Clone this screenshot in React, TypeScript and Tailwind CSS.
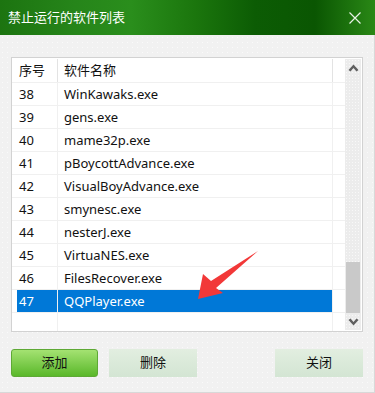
const rows = [
  { no: 38, name: 'WinKawaks.exe' },
  { no: 39, name: 'gens.exe' },
  { no: 40, name: 'mame32p.exe' },
  { no: 41, name: 'pBoycottAdvance.exe' },
  { no: 42, name: 'VisualBoyAdvance.exe' },
  { no: 43, name: 'smynesc.exe' },
  { no: 44, name: 'nesterJ.exe' },
  { no: 45, name: 'VirtuaNES.exe' },
  { no: 46, name: 'FilesRecover.exe' },
  { no: 47, name: 'QQPlayer.exe', selected: true },
]

const font = "font-['Noto_Sans','Noto_Sans_CJK_SC',sans-serif]"

const Chevron = ({ down }: { down?: boolean }) => (
  <svg width="11" height="8" viewBox="0 0 11 8" className={down ? 'rotate-180' : ''}>
    <path d="M5.5 0.5 L10.5 6 L8.5 7.5 L5.5 4 L2.5 7.5 L0.5 6 Z" fill="#5f5f5f" />
  </svg>
)

const App = () => {
  return (
    <div className={`relative w-[375px] h-[393px] flex flex-col ${font}`}>
      {/* title bar */}
      <div className="h-[35px] shrink-0 flex items-center justify-between pl-[8px] pr-[14px] bg-[linear-gradient(90deg,#1c7410_0%,#26851a_20%,#2a8e1c_35%,#1b760d_52%,#0c5c04_68%,#0a5602_84%,#2a8816_100%)]">
        <span className="text-white text-[13px] leading-none">禁止运行的软件列表</span>
        <svg width="12" height="12" viewBox="0 0 12 12">
          <path d="M0.5 0.5 L11.5 11.5 M11.5 0.5 L0.5 11.5" stroke="#e8f2e6" strokeWidth="1.2" />
        </svg>
      </div>

      {/* body */}
      <div className="flex-1 flex flex-col px-[11px] pt-[22px] pb-[15px] border-r border-b border-[#d8d8d8] bg-[#f1f1f1] bg-[radial-gradient(#fafafa_0.7px,transparent_0.8px)] bg-[length:5px_5px]">
        <div className="h-[275px] flex border border-[#d2d2d2] bg-white pt-px pr-px">
          <div className="flex-1 flex flex-col text-[13px] text-[#111]">
            <div className="h-[24px] flex items-center border-b border-[#f0f0f0]">
              <div className="w-[46px] h-full flex items-center pl-[7px] border-r border-[#e3e3e3]">序号</div>
              <div className="w-[275px] h-full flex items-center pl-[6px] border-r border-[#e3e3e3]">软件名称</div>
              <div className="flex-1" />
            </div>
            {rows.map((r) => (
              <div key={r.no} className="h-[23px] flex border-b border-[#f0f0f0]">
                <div className="w-[46px] flex pl-[5px] border-r border-[#f0f0f0]">
                  <div className={`flex-1 flex items-center pl-[2px] pt-px ${r.selected ? 'bg-[#0078d7] text-white' : ''}`}>{r.no}</div>
                </div>
                <div className={`w-[275px] flex items-center pl-[6px] pt-px border-r border-[#f0f0f0] ${r.selected ? 'bg-[#0078d7] text-white' : ''}`}>
                  {r.name}
                </div>
                <div className="flex-1" />
              </div>
            ))}
            <div className="flex-1 flex">
              <div className="w-[46px] border-r border-[#f0f0f0]" />
              <div className="w-[275px] border-r border-[#f0f0f0]" />
            </div>
          </div>

          {/* scrollbar */}
          <div className="w-[16px] mb-px flex flex-col items-center bg-[#ececec] bg-[radial-gradient(#f8f8f8_0.6px,transparent_0.7px)] bg-[length:3px_3px]">
            <div className="h-[17px] flex items-center justify-center">
              <Chevron />
            </div>
            <div className="flex-1" />
            <div className="w-[14px] h-[51px] bg-[#c9c9c9]" />
            <div className="h-[17px] flex items-center justify-center">
              <Chevron down />
            </div>
          </div>
        </div>

        {/* buttons */}
        <div className="mt-[17px] flex text-[13px] text-[#111]">
          <button className="w-[87px] h-[28px] rounded-[3px] border border-[#5ea935] bg-[linear-gradient(#a4e272,#5ab82a)] flex items-center justify-center">添加</button>
          <button className="ml-[11px] w-[88px] h-[28px] bg-[linear-gradient(#e2eee0,#d3e5d3)] flex items-center justify-center">删除</button>
          <div className="flex-1" />
          <button className="w-[88px] h-[28px] bg-[linear-gradient(#e2eee0,#d3e5d3)] flex items-center justify-center">关闭</button>
        </div>
      </div>

      {/* red annotation arrow */}
      <svg className="absolute left-[190px] top-[245px]" width="75" height="60" viewBox="0 0 75 60">
        <polygon points="8,54 13,29 21,36 68,6 26,43 33,48" fill="#f23838" />
      </svg>
    </div>
  )
}

export default App
